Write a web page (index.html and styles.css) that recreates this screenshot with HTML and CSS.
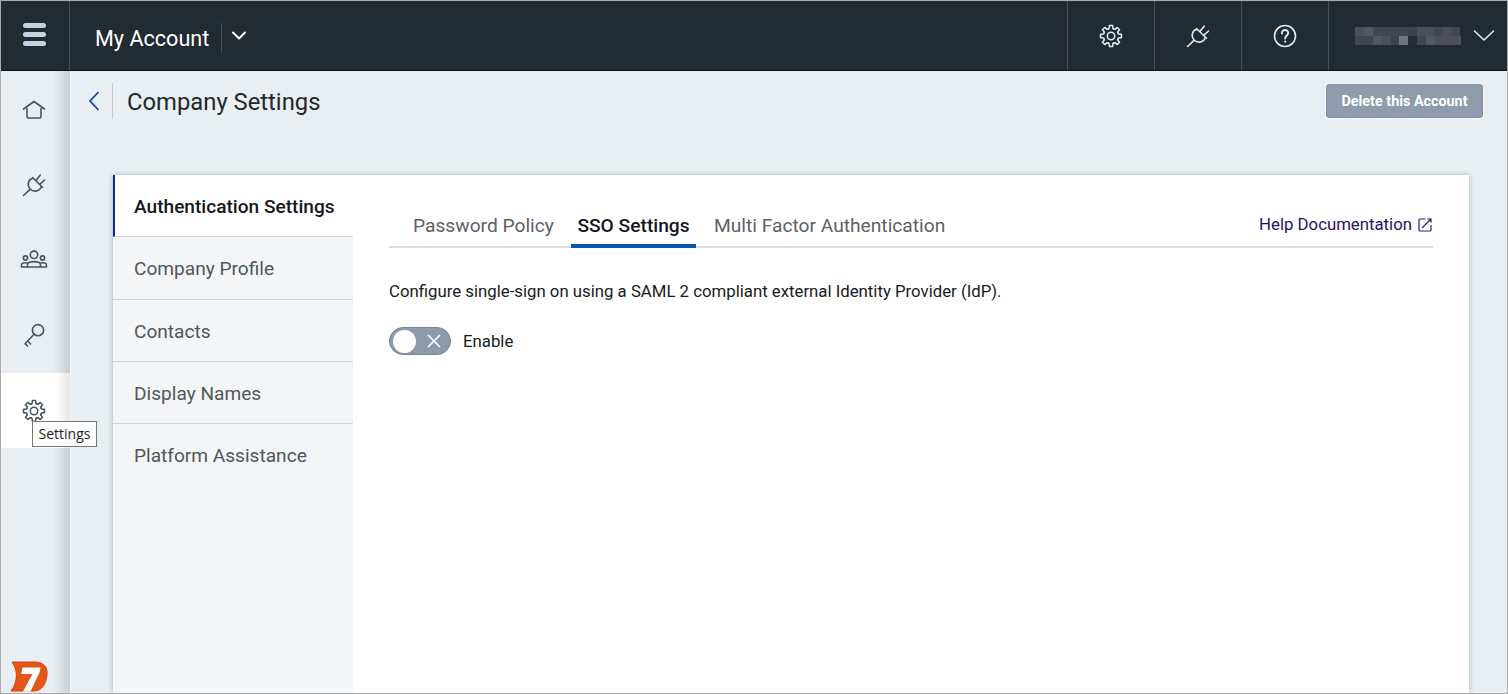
FILE: index.html
```html
<!DOCTYPE html>
<html lang="en">
<head>
<meta charset="utf-8">
<title>Company Settings</title>
<link rel="stylesheet" href="styles.css">
</head>
<body>
<svg class="defs" width="0" height="0">
  <symbol id="gear" viewBox="-12.6 -12.6 25.2 25.2">
    <path id="tooth" d="M-3.06-7.39L-2-7.9L-1.7-11H1.7L2-7.9L3.06-7.39"/>
    <use href="#tooth" transform="rotate(45)"/><use href="#tooth" transform="rotate(90)"/><use href="#tooth" transform="rotate(135)"/><use href="#tooth" transform="rotate(180)"/><use href="#tooth" transform="rotate(225)"/><use href="#tooth" transform="rotate(270)"/><use href="#tooth" transform="rotate(315)"/>
    <circle r="3.9"/>
  </symbol>
  <symbol id="plug" viewBox="0 0 24 24">
    <path d="M1.5 22.5L8.3 16.2M10.5 4.5L20.5 14.2M14.3 7L18.2 2.2M18.2 10.8L22.6 7M11 5.3C6.2 6.2 4.6 12.2 8.2 16C12 19.6 18 18.3 19.2 13.6"/>
  </symbol>
</svg>
<div class="app">
  <header class="topbar">
    <div class="menu"><span></span><span></span><span></span></div>
    <div class="account"><span class="account-name">My Account</span>
      <svg class="caret" width="16" height="10" viewBox="0 0 16 10"><path d="M2 1.5L8 7.5L14 1.5"/></svg>
    </div>
    <div class="action"><svg class="icon" width="24" height="24"><use href="#gear"/></svg></div>
    <div class="action"><svg class="icon" width="24" height="24"><use href="#plug"/></svg></div>
    <div class="action"><svg class="icon" width="24" height="24" viewBox="0 0 24 24"><circle cx="12" cy="12" r="10.5"/><path stroke-width="2" d="M8.9 9.4C8.9 4.6 15.3 5 15.2 9.1C15.2 11.5 12.2 11.5 12.2 14.4M12.2 17.6V17.8"/></svg></div>
    <div class="user">
      <svg width="107" height="18" viewBox="0 0 107 18" shape-rendering="crispEdges">
        <path fill="#414650" d="M0 0H105V9H106V18H0Z"/>
        <path fill="#4a4f59" d="M0 0H9V9H0ZM62 0H79V9H62ZM88 0H97V9H88ZM18 9H36V18H18ZM97 9H106V18H97Z"/>
        <path fill="#515a64" d="M9 0H18V9H9ZM71 9H80V18H71Z"/>
        <path fill="#50555f" d="M18 9H27V18H18Z"/><path fill="#3d424b" d="M36 9H44V18H36ZM53 0H62V9H53Z"/>
        <path fill="#6e7883" d="M44 9H53V18H44Z"/><path fill="#252d36" d="M53 9H62V18H53Z"/>
        <path fill="#4d505c" d="M80 9H106V18H80Z"/>
      </svg>
      <svg class="icon" width="22" height="14" viewBox="0 0 22 14"><path d="M1.5 2L11 11L20.5 2"/></svg>
    </div>
  </header>
  <div class="body">
    <nav class="rail">
      <div class="rail-item"><svg class="icon" width="24" height="24" viewBox="0 0 24 24"><path d="M1.5 11L12 3.5L22.5 11M5 8.8V18.5Q5 20 6.5 20H17.5Q19 20 19 18.5V8.8"/></svg></div>
      <div class="rail-item"><svg class="icon" width="24" height="24"><use href="#plug"/></svg></div>
      <div class="rail-item"><svg class="icon" width="28" height="24" viewBox="0 0 28 24"><circle cx="14" cy="6.8" r="3.7"/><circle cx="5.5" cy="10" r="2.1"/><circle cx="22.5" cy="10" r="2.1"/><path d="M7.5 19V16.8C7.5 12.5 20.5 12.5 20.5 16.8V19ZM7.3 15C4 14.3 1.5 15 1.5 17.2V19H7.5M20.7 15C24 14.3 26.5 15 26.5 17.2V19H20.5"/></svg></div>
      <div class="rail-item"><svg class="icon" width="24" height="24" viewBox="0 0 24 24"><circle cx="16" cy="7.2" r="5.6"/><path d="M12 11.3L3 20.7L5.5 23M5.5 18L8.7 21"/></svg></div>
      <div class="rail-item active"><svg class="icon" width="24" height="24"><use href="#gear"/></svg><span class="tip">Settings</span></div>
      <svg class="brand" width="39" height="32" viewBox="0 0 39 32"><path fill="#e4571b" stroke="#d7430c" d="M2 1H25C34 1 38 7 37 14C36 23 32 30 24 30H1C8 21 8 9 2 1Z"/><path fill="#fff" d="M12.5 6.5H30.5L29.5 11.5L20.5 30.5H13L22.5 13H11.3Z"/></svg>
    </nav>
    <main class="page">
      <div class="titlebar">
        <svg class="back" width="14" height="20" viewBox="0 0 14 20"><path d="M11.5 1L3 10L11.5 19"/></svg>
        <h1>Company Settings</h1>
        <button class="delete">Delete this Account</button>
      </div>
      <div class="card">
        <ul class="side">
          <li class="current">Authentication Settings</li>
          <li>Company Profile</li>
          <li>Contacts</li>
          <li>Display Names</li>
          <li>Platform Assistance</li>
        </ul>
        <section class="content">
          <div class="tabs">
            <span class="tab policy">Password Policy</span>
            <span class="tab selected">SSO Settings</span>
            <span class="tab mfa">Multi Factor Authentication</span>
            <a class="help"><span>Help Documentation</span>
              <svg width="14" height="14" viewBox="0 0 14 14"><path d="M7.5 1H1.8Q1 1 1 1.8V12.2Q1 13 1.8 13H12.2Q13 13 13 12.2V7M4 10L12.5 1.5M9.3 1H13V4.7"/></svg></a>
          </div>
          <p class="intro">Configure single-sign on using a SAML 2 compliant external Identity Provider (IdP).</p>
          <div class="enable"><span class="toggle"><i></i><svg width="16" height="16" viewBox="0 0 16 16"><path d="M2 2L14 14M14 2L2 14"/></svg></span><span>Enable</span></div>
        </section>
      </div>
    </main>
  </div>
</div>
</body>
</html>
```
FILE: styles.css
```css
* { box-sizing: border-box; }
body { margin: 0; font-family: Roboto, sans-serif; color: #171b20; }
.defs { position: absolute; }
.app { width: 1508px; height: 694px; border: 1px solid #a9abad; background: #e8eef2; display: flex; flex-direction: column; overflow: hidden; }
svg { display: block; flex: none; fill: none; }
.icon { stroke: currentColor; stroke-width: 1.6; stroke-linejoin: round; stroke-linecap: round; overflow: visible; }

.topbar { flex: none; height: 70px; display: flex; background: #222a32; border-bottom: 1px solid #0b0f14; color: #dceaf5; }
.menu { width: 69px; border-right: 1px solid #474e55; display: flex; flex-direction: column; gap: 4px; padding: 22px 0 0 22px; }
.menu span { width: 23px; height: 5px; border-radius: 2.5px; background: #c5d3e1; }
.account { flex: 1; display: flex; align-items: center; padding: 5px 0 0 25px; color: #fff; font-size: 21.6px; }
.account-name { width: 127px; height: 30px; line-height: 31px; border-right: 1px solid #474e55; white-space: nowrap; }
.caret { margin: -5px 0 0 9px; stroke: #fff; stroke-width: 2; stroke-linecap: round; stroke-linejoin: round; }
.action { width: 87px; border-left: 1px solid #474e55; display: flex; align-items: center; justify-content: center; padding-top: 1px; }
.user { width: 179px; border-left: 1px solid #474e55; display: flex; align-items: center; gap: 11px; padding: 1px 0 0 26px; }

.body { flex: 1; display: flex; min-height: 0; }
.rail { width: 69px; position: relative; display: flex; flex-direction: column; color: #46545f; padding-top: 1px; }
.rail::after { content: ""; position: absolute; inset: 0 0 0 auto; width: 17px; background: linear-gradient(90deg, rgba(90,105,112,0), rgba(90,105,112,.09) 45%, rgba(90,105,112,.24)); }
.rail-item { height: 75.25px; padding-right: 3px; display: flex; align-items: center; justify-content: center; position: relative; }
.active { background: #fff; z-index: 1; height: 75px; }
.active::after { content: ""; position: absolute; inset: 0 0 0 auto; width: 13px; background: linear-gradient(90deg, rgba(190,180,170,0), rgba(190,180,170,.35)); }
.tip { position: absolute; left: 31px; top: 48px; width: 65px; height: 26px; border: 1px solid #777; background: #fff; color: #222; font: 14px/24px "Open Sans", sans-serif; text-align: center; z-index: 2; white-space: nowrap; }
.brand { margin: auto 0 0 9px; }

.page { flex: 1; display: flex; flex-direction: column; border-left: 1px solid #f4f7f9; padding: 12px 24px 0 16px; }
.titlebar { height: 36px; display: flex; align-items: center; }
.back { stroke: #0d46b4; stroke-width: 1.8; }
h1 { margin: 0 auto 0 11px; padding-left: 14px; height: 36px; line-height: 38px; border-left: 1px solid #c5cacf; font-size: 23.8px; font-weight: 400; color: #23282d; }
.delete { width: 157px; height: 34px; margin: 0; padding: 1px 0 0; border: 1px solid #8390a0; border-radius: 3px; background: #8e9cae; box-shadow: 0 0 0 1px #f5f8fa; color: #fff; font: 700 14.35px Roboto, sans-serif; }

.card { flex: 1; margin: 56px 14px 0 26px; display: flex; background: #fff; box-shadow: 0 0 5px rgba(70,95,100,.42); }
.side { width: 240px; margin: 0; padding: 0; list-style: none; background: #f3f5f7; }
.side li { height: 62.3px; padding-left: 21px; border-bottom: 1px solid #d2d6d9; font-size: 19.1px; line-height: 63px; color: #51565b; white-space: nowrap; }
.side li:last-child { border: 0; }
.side .current { background: #fff; border-left: 2px solid #1227a5; padding-left: 19px; color: #14181c; font-weight: 500; }
.content { flex: 1; padding: 26px 36px 0; }
.tabs { height: 47px; display: flex; border-bottom: 2px solid #dedfe1; }
.tab { height: 47px; line-height: 50px; font-size: 19.2px; color: #5c6166; white-space: nowrap; }
.policy { width: 182px; padding-left: 24px; }
.selected { width: 125px; text-align: center; border-bottom: 4px solid #0854b5; color: #14181c; font-weight: 500; }
.mfa { padding-left: 18px; }
.help { margin-left: auto; padding-right: 1px; height: 47px; display: flex; gap: 6px; color: #28106b; font-size: 16.77px; line-height: 46px; }
.help svg { margin-top: 17px; stroke: #38127d; stroke-width: 1.2; }
.intro { margin: 33px 0 0; font-size: 16.77px; line-height: 20px; white-space: nowrap; }
.enable { margin-top: 26px; display: flex; align-items: center; gap: 12px; font-size: 16.77px; }
.toggle { width: 62px; height: 28px; border: 1px solid #748499; border-radius: 14px; background: #8c9aac; display: flex; align-items: center; padding: 0 8px 0 3px; justify-content: space-between; }
.toggle i { width: 23px; height: 23px; border-radius: 50%; background: #fff; }
.toggle svg { stroke: #fff; stroke-width: 1.6; }
```
